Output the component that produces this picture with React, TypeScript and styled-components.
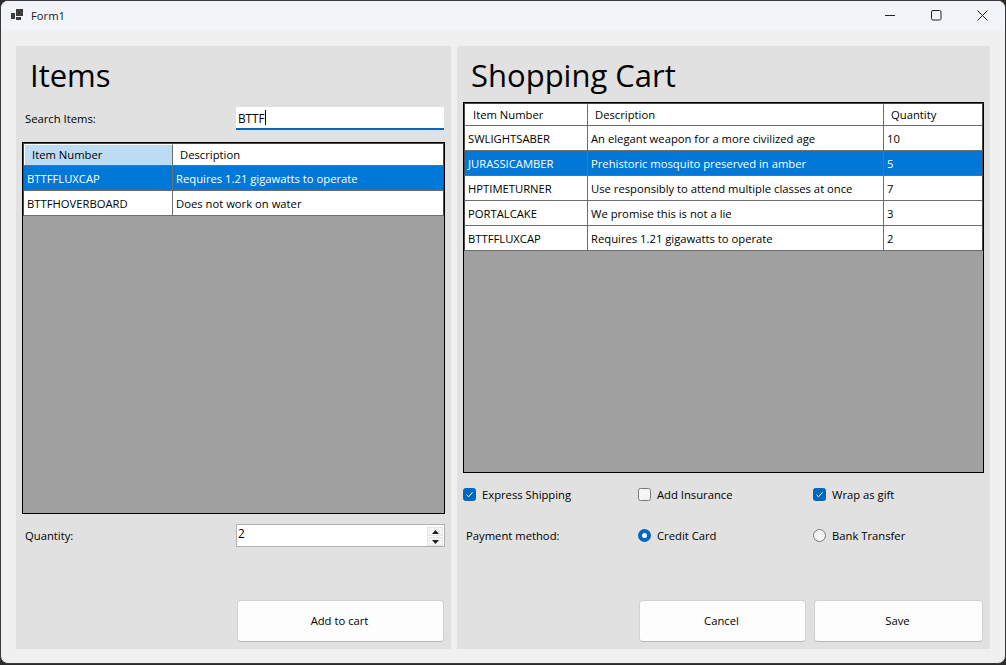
import React from 'react'
import styled, { createGlobalStyle } from 'styled-components'

const GlobalStyle = createGlobalStyle`
  html, body {
    margin: 0;
    padding: 0;
    background: #2b2b2b;
  }
  * {
    box-sizing: border-box;
  }
`

const Desktop = styled.div`
  width: 1006px;
  height: 665px;
  background: #2b2b2b;
  overflow: hidden;
`

const Window = styled.div`
  width: 1006px;
  height: 664px;
  background: #f0f0f0;
  border: 1px solid #3a3a3a;
  border-radius: 8px;
  overflow: hidden;
  display: flex;
  flex-direction: column;
  font-family: 'Open Sans', 'Noto Sans', sans-serif;
  font-size: 11.25px;
  color: #000;
`

const TitleBar = styled.div`
  height: 30px;
  flex: none;
  background: #f3f4f9;
  display: flex;
  align-items: center;
  padding: 0 0 2px 9px;
`

const AppIcon = styled.svg`
  width: 14px;
  height: 14px;
  margin-right: 7px;
`

const TitleText = styled.span`
  font-size: 11.25px;
  color: #1a1a1a;
  flex: 1;
`

const WinButton = styled.div`
  width: 46px;
  height: 28px;
  display: flex;
  align-items: center;
  justify-content: center;
`

const Body = styled.div`
  flex: 1;
  display: flex;
  gap: 6px;
  padding: 15px 15px 14px 15px;
`

const Panel = styled.section<{ $width: number }>`
  width: ${(p) => p.$width}px;
  flex: none;
  background: #e1e1e1;
  padding: 0 6px;
  display: flex;
  flex-direction: column;
`

const Heading = styled.h1<{ $height: number }>`
  margin: 0;
  height: ${(p) => p.$height}px;
  padding: 7px 0 0 8px;
  font-size: 31px;
  line-height: 44px;
  font-weight: 400;
  color: #000;
  flex: none;
`

const FieldRow = styled.div<{ $top?: number }>`
  display: flex;
  align-items: center;
  justify-content: space-between;
  height: 23px;
  margin-top: ${(p) => p.$top ?? 0}px;
  padding-left: 3px;
  flex: none;
`

const SearchInput = styled.div`
  width: 208px;
  height: 23px;
  margin-right: 1px;
  background: #fff;
  border-bottom: 2px solid #0067c0;
  padding-left: 2px;
  display: flex;
  align-items: center;
  font-size: 11.75px;
`

const Caret = styled.span`
  width: 1px;
  height: 15px;
  background: #000;
  margin-left: 0;
`

const GridBox = styled.div<{ $height: number; $top: number }>`
  height: ${(p) => p.$height}px;
  margin-top: ${(p) => p.$top}px;
  flex: none;
  background: #a0a0a0;
  border: 1px solid #000;
  display: flex;
  flex-direction: column;
`

const GridRow = styled.div<{ $columns: string; $selected?: boolean; $header?: boolean }>`
  display: grid;
  grid-template-columns: ${(p) => p.$columns};
  height: ${(p) => (p.$header ? 23 : 25)}px;
  flex: none;
  background: ${(p) => (p.$selected ? '#0078d7' : '#fff')};
  color: ${(p) => (p.$selected ? '#fff' : '#000')};
  border-bottom: 1px solid #6d6d6d;
  border-left: 1px solid #4a4a4a;
  border-right: 1px solid #4a4a4a;
  border-top: ${(p) => (p.$header ? '1px solid #4a4a4a' : 'none')};
`

const Cell = styled.div`
  display: flex;
  align-items: center;
  padding-left: 3px;
  border-right: 1px solid #6d6d6d;
  white-space: nowrap;
  overflow: hidden;
  &:last-child {
    border-right: none;
  }
`

const HeaderCell = styled(Cell)<{ $active?: boolean }>`
  padding-left: 7px;
  padding-bottom: 1px;
  background: ${(p) => (p.$active ? '#bcdcf4' : '#fff')};
  border-top: 1px solid #fff;
  box-shadow: ${(p) => (p.$active ? 'inset 1px 0 0 #fff' : 'none')};
  &:first-child {
    padding-left: 8px;
  }
`

const QuantityInput = styled.div`
  width: 209px;
  height: 23px;
  background: #fff;
  border: 1px solid #b0b0b6;
  display: flex;
  align-items: flex-start;
  justify-content: space-between;
  padding: 1px 1px 0 1px;
  font-size: 11.75px;
  line-height: 15px;
`

const Spinner = styled.div`
  width: 16px;
  display: flex;
  flex-direction: column;
  gap: 1px;
  padding-top: 1px;
`

const SpinButton = styled.div`
  height: 9px;
  display: flex;
  align-items: center;
  justify-content: center;
  background: #f4f4f4;
  border: 1px solid #e4e4e4;
`

const Footer = styled.div<{ $top: number }>`
  display: flex;
  justify-content: flex-end;
  gap: 8px;
  margin-top: ${(p) => p.$top}px;
  padding-right: 1px;
  flex: none;
`

const ActionButton = styled.button<{ $width: number }>`
  width: ${(p) => p.$width}px;
  height: 42px;
  background: #fdfdfd;
  border: 1px solid #d0d0d0;
  border-bottom-color: #b8b8b8;
  border-radius: 4px;
  font: inherit;
  color: #000;
  padding: 0 2px 2px 0;
`

const OptionRow = styled.div<{ $top: number }>`
  display: grid;
  grid-template-columns: 175px 175px 1fr;
  align-items: center;
  height: 16px;
  margin-top: ${(p) => p.$top}px;
  flex: none;
`

const Option = styled.div`
  display: flex;
  align-items: center;
  gap: 6px;
`

const CheckBox = styled.span<{ $checked?: boolean }>`
  width: 13px;
  height: 13px;
  border-radius: 2.5px;
  background: ${(p) => (p.$checked ? '#0067c0' : '#f4f4f4')};
  border: 1px solid ${(p) => (p.$checked ? '#0067c0' : '#7a7a7a')};
  display: flex;
  align-items: center;
  justify-content: center;
`

const Radio = styled.span<{ $checked?: boolean }>`
  width: 13px;
  height: 13px;
  border-radius: 50%;
  background: ${(p) => (p.$checked ? '#fff' : '#f4f4f4')};
  border: ${(p) => (p.$checked ? '4px solid #0067c0' : '1px solid #7a7a7a')};
`

const PaymentLabel = styled.span`
  padding-left: 3px;
`

const searchColumns = '149px 1fr'
const cartColumns = '123px 296px 1fr'

const items = [
  ['BTTFFLUXCAP', 'Requires 1.21 gigawatts to operate'],
  ['BTTFHOVERBOARD', 'Does not work on water'],
]

const cart = [
  ['SWLIGHTSABER', 'An elegant weapon for a more civilized age', '10'],
  ['JURASSICAMBER', 'Prehistoric mosquito preserved in amber', '5'],
  ['HPTIMETURNER', 'Use responsibly to attend multiple classes at once', '7'],
  ['PORTALCAKE', 'We promise this is not a lie', '3'],
  ['BTTFFLUXCAP', 'Requires 1.21 gigawatts to operate', '2'],
]

const Tick = () => (
  <svg width="9" height="9" viewBox="0 0 9 9" fill="none">
    <path d="M1.5 4.8 L3.6 6.8 L7.6 2.2" stroke="#fff" strokeWidth="1" />
  </svg>
)

const Arrow = ({ down }: { down?: boolean }) => (
  <svg width="7" height="4" viewBox="0 0 7 4">
    <path d={down ? 'M0 0 H7 L3.5 4 Z' : 'M0 4 H7 L3.5 0 Z'} fill="#222" />
  </svg>
)

const App: React.FC = () => {
  return (
    <Desktop>
      <GlobalStyle />
      <Window>
        <TitleBar>
          <AppIcon viewBox="0 0 14 14">
            <rect x="1" y="5" width="4" height="6" fill="#3c3c3c" />
            <rect x="6" y="1" width="7" height="7" fill="#3c3c3c" />
            <rect x="6" y="9" width="5" height="3" fill="#3c3c3c" />
          </AppIcon>
          <TitleText>Form1</TitleText>
          <WinButton>
            <svg width="11" height="11" viewBox="0 0 11 11">
              <path d="M0 5.5 H10" stroke="#222" strokeWidth="1" />
            </svg>
          </WinButton>
          <WinButton>
            <svg width="11" height="11" viewBox="0 0 11 11" fill="none">
              <rect x="0.5" y="0.5" width="9.5" height="9.5" rx="1.5" stroke="#222" />
            </svg>
          </WinButton>
          <WinButton>
            <svg width="11" height="11" viewBox="0 0 11 11" fill="none">
              <path d="M0.5 0.5 L10.5 10.5 M10.5 0.5 L0.5 10.5" stroke="#222" />
            </svg>
          </WinButton>
        </TitleBar>
        <Body>
          <Panel $width={435}>
            <Heading $height={61}>Items</Heading>
            <FieldRow>
              <span>Search Items:</span>
              <SearchInput>
                BTTF
                <Caret />
              </SearchInput>
            </FieldRow>
            <GridBox $height={372} $top={12}>
              <GridRow $columns={searchColumns} $header>
                <HeaderCell $active>Item Number</HeaderCell>
                <HeaderCell>Description</HeaderCell>
              </GridRow>
              {items.map((row, i) => (
                <GridRow key={row[0]} $columns={searchColumns} $selected={i === 0}>
                  {row.map((value) => (
                    <Cell key={value}>{value}</Cell>
                  ))}
                </GridRow>
              ))}
            </GridBox>
            <FieldRow $top={10}>
              <span>Quantity:</span>
              <QuantityInput>
                2
                <Spinner>
                  <SpinButton>
                    <Arrow />
                  </SpinButton>
                  <SpinButton>
                    <Arrow down />
                  </SpinButton>
                </Spinner>
              </QuantityInput>
            </FieldRow>
            <Footer $top={53}>
              <ActionButton $width={207}>Add to cart</ActionButton>
            </Footer>
          </Panel>
          <Panel $width={533}>
            <Heading $height={56}>Shopping Cart</Heading>
            <GridBox $height={371} $top={0}>
              <GridRow $columns={cartColumns} $header>
                <HeaderCell>Item Number</HeaderCell>
                <HeaderCell>Description</HeaderCell>
                <HeaderCell>Quantity</HeaderCell>
              </GridRow>
              {cart.map((row, i) => (
                <GridRow key={row[0]} $columns={cartColumns} $selected={i === 1}>
                  {row.map((value) => (
                    <Cell key={value}>{value}</Cell>
                  ))}
                </GridRow>
              ))}
            </GridBox>
            <OptionRow $top={13}>
              <Option>
                <CheckBox $checked>
                  <Tick />
                </CheckBox>
                Express Shipping
              </Option>
              <Option>
                <CheckBox />
                Add Insurance
              </Option>
              <Option>
                <CheckBox $checked>
                  <Tick />
                </CheckBox>
                Wrap as gift
              </Option>
            </OptionRow>
            <OptionRow $top={25}>
              <PaymentLabel>Payment method:</PaymentLabel>
              <Option>
                <Radio $checked />
                Credit Card
              </Option>
              <Option>
                <Radio />
                Bank Transfer
              </Option>
            </OptionRow>
            <Footer $top={57}>
              <ActionButton $width={167}>Cancel</ActionButton>
              <ActionButton $width={169}>Save</ActionButton>
            </Footer>
          </Panel>
        </Body>
      </Window>
    </Desktop>
  )
}

export default App
